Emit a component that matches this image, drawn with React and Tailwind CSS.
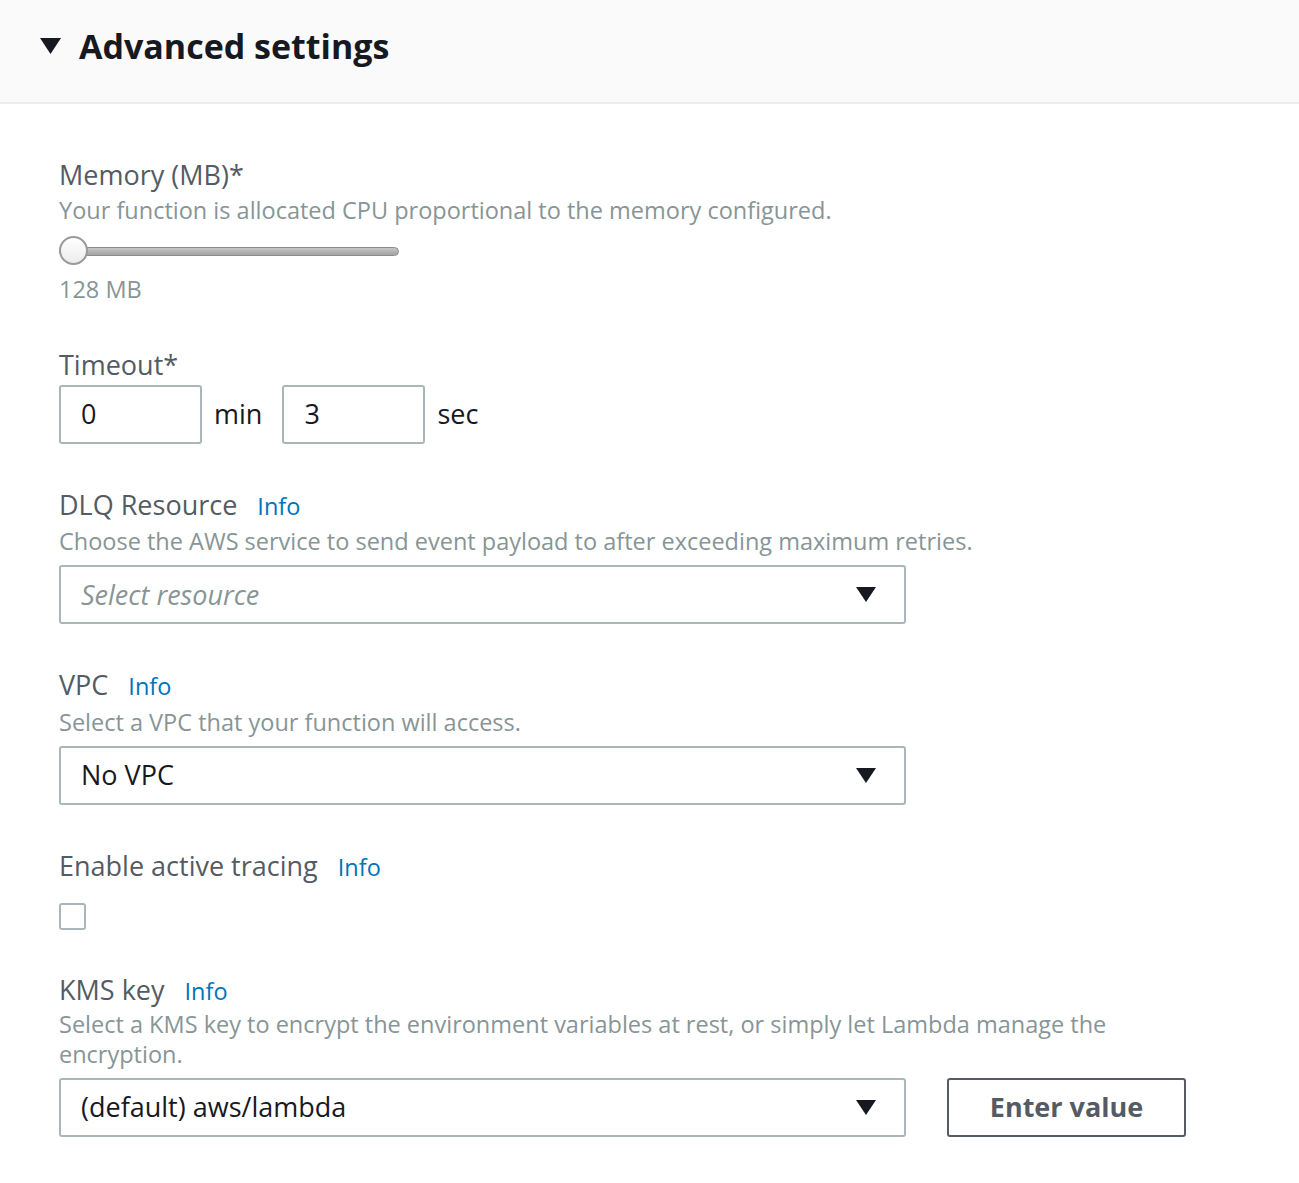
import React from "react";

const Info = () => (
  <span className="ml-5 text-[23.5px] text-[#0073bb]">Info</span>
);

const Caret = () => (
  <svg width="20" height="15" viewBox="0 0 20 15" className="shrink-0">
    <path d="M0 0 H20 L10 15 Z" fill="#16191f" />
  </svg>
);

const Select = ({ value, placeholder }) => (
  <div className="flex h-[59px] w-[847px] items-center justify-between rounded-[3px] border-2 border-[#aab7b8] bg-white pl-5 pr-7">
    {placeholder ? (
      <span className="text-[27px] italic text-[#879596]">{placeholder}</span>
    ) : (
      <span className="text-[27px] text-[#16191f]">{value}</span>
    )}
    <Caret />
  </div>
);

const App = () => {
  return (
    <div
      className="min-h-[1183px] bg-white"
      style={{ fontFamily: '"Open Sans", "Lato", sans-serif' }}
    >
      <div className="flex h-[104px] items-center gap-[18px] border-b-2 border-[#eaeded] bg-[#fafafa] pb-[10px] pl-10">
        <svg width="21" height="16" viewBox="0 0 21 16">
          <path d="M0 0 H21 L10.5 16 Z" fill="#16191f" />
        </svg>
        <h2 className="text-[34px] font-bold text-[#16191f]">Advanced settings</h2>
      </div>

      <div className="flex flex-col pl-[59px] pt-[54px]">
        <div className="flex flex-col">
          <label className="text-[27px] leading-[34px] text-[#545b64]">Memory (MB)*</label>
          <p className="text-[23.5px] leading-[36px] text-[#879596]">
            Your function is allocated CPU proportional to the memory configured.
          </p>
          <div className="relative mt-[8px] flex h-[30px] w-[340px] items-center">
            <div className="h-[9px] w-full rounded-full border border-[#8c8c8c] bg-gradient-to-b from-[#c6c6c6] to-[#a3a3a3]" />
            <div className="absolute left-0 top-0 h-[29px] w-[29px] rounded-full border-2 border-[#9a9a9a] bg-gradient-to-b from-white to-[#ececec]" />
          </div>
          <p className="mt-[6px] text-[23.5px] leading-[34px] text-[#879596]">128 MB</p>
        </div>

        <div className="mt-[42px] flex flex-col">
          <label className="text-[27px] leading-[34px] text-[#545b64]">Timeout*</label>
          <div className="mt-[3px] flex items-center">
            <div className="flex h-[59px] w-[143px] items-center rounded-[3px] border-2 border-[#aab7b8] pl-5 text-[27px] text-[#16191f]">
              0
            </div>
            <span className="ml-3 text-[27px] text-[#16191f]">min</span>
            <div className="ml-5 flex h-[59px] w-[143px] items-center rounded-[3px] border-2 border-[#aab7b8] pl-5 text-[27px] text-[#16191f]">
              3
            </div>
            <span className="ml-3 text-[27px] text-[#16191f]">sec</span>
          </div>
        </div>

        <div className="mt-[44px] flex flex-col">
          <div className="flex items-baseline">
            <label className="text-[27px] leading-[34px] text-[#545b64]">DLQ Resource</label>
            <Info />
          </div>
          <p className="text-[23.5px] leading-[34px] text-[#879596]">
            Choose the AWS service to send event payload to after exceeding maximum retries.
          </p>
          <div className="mt-[7px]">
            <Select placeholder="Select resource" />
          </div>
        </div>

        <div className="mt-[44px] flex flex-col">
          <div className="flex items-baseline">
            <label className="text-[27px] leading-[34px] text-[#545b64]">VPC</label>
            <Info />
          </div>
          <p className="text-[23.5px] leading-[34px] text-[#879596]">
            Select a VPC that your function will access.
          </p>
          <div className="mt-[7px]">
            <Select value="No VPC" />
          </div>
        </div>

        <div className="mt-[44px] flex flex-col">
          <div className="flex items-baseline">
            <label className="text-[27px] leading-[34px] text-[#545b64]">Enable active tracing</label>
            <Info />
          </div>
          <div className="mt-[18px] h-[27px] w-[27px] rounded-[3px] border-2 border-[#aab7b8] bg-white" />
        </div>

        <div className="mt-[43px] flex flex-col">
          <div className="flex items-baseline">
            <label className="text-[27px] leading-[34px] text-[#545b64]">KMS key</label>
            <Info />
          </div>
          <p className="w-[1060px] text-[23.5px] leading-[30px] text-[#879596]">
            Select a KMS key to encrypt the environment variables at rest, or simply let Lambda manage the encryption.
          </p>
          <div className="mt-[9px] flex items-center gap-[41px]">
            <Select value="(default) aws/lambda" />
            <button className="h-[59px] w-[239px] rounded-[3px] border-2 border-[#545b64] bg-white text-[27px] font-bold text-[#545b64]">
              Enter value
            </button>
          </div>
        </div>
      </div>
    </div>
  );
};

export default App;
